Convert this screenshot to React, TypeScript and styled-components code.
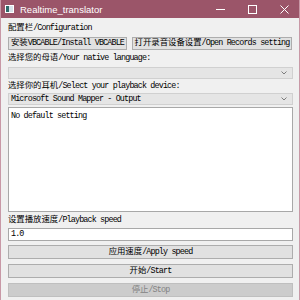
import React from "react";
import styled, { createGlobalStyle } from "styled-components";

const Global = createGlobalStyle`
  html, body {
    margin: 0;
    padding: 0;
    background: #ffffff;
  }
`;

const Frame = styled.div`
  width: 300px;
  height: 300px;
  display: flex;
  flex-direction: column;
  background: #f0f0f0;
  border-left: 1px solid #c898a6;
  border-right: 1px solid #c898a6;
  box-sizing: border-box;
  overflow: hidden;
  font-family: "Liberation Mono", "Noto Sans CJK SC", monospace;
  font-size: 8.4px;
  letter-spacing: -0.84px;
  color: #000;
`;

// CJK glyphs are full width, so they keep their natural spacing
const Han = styled.span`
  letter-spacing: 0;
`;

const TitleBar = styled.div`
  height: 18px;
  flex: none;
  display: flex;
  align-items: center;
  background: #9b5569;
  color: #fff;
  margin: 0 -1px;
  letter-spacing: 0;
`;

const AppIcon = styled.svg`
  margin-left: 5px;
  margin-right: 6px;
  flex: none;
`;

const Title = styled.span`
  font-family: "Liberation Sans", "Noto Sans", sans-serif;
  font-size: 9.5px;
  flex: 1;
`;

const Caption = styled.div`
  width: 32px;
  height: 18px;
  display: flex;
  align-items: center;
  justify-content: center;
`;

const Body = styled.div`
  flex: 1;
  display: flex;
  flex-direction: column;
  padding: 0 6px 3px 7px;
`;

const Label = styled.div<{ $h: number; $mt: number }>`
  height: ${(p) => p.$h}px;
  margin-top: ${(p) => p.$mt}px;
  line-height: ${(p) => p.$h}px;
  white-space: nowrap;
`;

const ButtonRow = styled.div`
  display: flex;
  gap: 5px;
  margin-top: 2px;
  height: 13px;
`;

const Button = styled.div<{ $w?: number; $h?: number; $mt?: number; $disabled?: boolean }>`
  box-sizing: border-box;
  flex: none;
  ${(p) => (p.$w ? `width: ${p.$w}px;` : "")}
  height: ${(p) => p.$h ?? 13}px;
  line-height: ${(p) => (p.$h ?? 13) - 2}px;
  margin-top: ${(p) => p.$mt ?? 0}px;
  background: ${(p) => (p.$disabled ? "#cccccc" : "#e1e1e1")};
  border: 1px solid ${(p) => (p.$disabled ? "#bfbfbf" : "#adadad")};
  color: ${(p) => (p.$disabled ? "#838383" : "#000")};
  text-align: center;
  white-space: nowrap;
  overflow: hidden;
`;

const Combo = styled.div<{ $mt: number }>`
  box-sizing: border-box;
  height: 12px;
  margin-top: ${(p) => p.$mt}px;
  background: #e5e5e5;
  border: 1px solid #d0d0d0;
  display: flex;
  align-items: center;
  padding: 0 5px 0 2px;
  white-space: nowrap;
`;

const ComboText = styled.span`
  flex: 1;
`;

const TextArea = styled.div`
  box-sizing: border-box;
  flex: 1;
  margin-top: 2px;
  background: #fff;
  border: 1px solid #a8a8a8;
  padding: 3px 2px;
  line-height: 10px;
`;

const Input = styled.div`
  box-sizing: border-box;
  height: 13px;
  line-height: 11px;
  margin-top: 2px;
  background: #fff;
  border: 1px solid #a8a8a8;
  padding: 0 2px;
`;

const Chevron = () => (
  <svg width="6" height="4" viewBox="0 0 6 4">
    <polyline points="0.5,0.5 3,3 5.5,0.5" fill="none" stroke="#707070" strokeWidth="0.9" />
  </svg>
);

const App: React.FC = () => (
  <Frame>
    <Global />
    <TitleBar>
      <AppIcon width="9" height="8" viewBox="0 0 9 8">
        <rect x="0" y="0" width="9" height="8" fill="#ffffff" />
        <rect x="1" y="1" width="3" height="6" fill="#2f6b6a" />
        <rect x="4" y="1" width="4" height="6" fill="#d8e3ea" />
      </AppIcon>
      <Title>Realtime_translator</Title>
      <Caption>
        <svg width="9" height="9" viewBox="0 0 9 9">
          <line x1="0" y1="4.5" x2="9" y2="4.5" stroke="#fff" strokeWidth="1" />
        </svg>
      </Caption>
      <Caption>
        <svg width="9" height="9" viewBox="0 0 9 9">
          <rect x="0.5" y="0.5" width="8" height="8" fill="none" stroke="#fff" strokeWidth="1" />
        </svg>
      </Caption>
      <Caption>
        <svg width="9" height="9" viewBox="0 0 9 9">
          <path d="M0.5 0.5 L8.5 8.5 M8.5 0.5 L0.5 8.5" stroke="#fff" strokeWidth="1" />
        </svg>
      </Caption>
    </TitleBar>
    <Body>
      <Label $h={13} $mt={4}>
        <Han>配置栏</Han>/Configuration
      </Label>
      <ButtonRow>
        <Button $w={119}>
          <Han>安装</Han>VBCABLE/Install VBCABLE
        </Button>
        <Button $w={160}>
          <Han>打开录音设备设置</Han>/Open Records setting
        </Button>
      </ButtonRow>
      <Label $h={13} $mt={2}>
        <Han>选择您的母语</Han>/Your native language:
      </Label>
      <Combo $mt={2}>
        <ComboText />
        <Chevron />
      </Combo>
      <Label $h={10} $mt={2}>
        <Han>选择你的耳机</Han>/Select your playback device:
      </Label>
      <Combo $mt={2}>
        <ComboText>Microsoft Sound Mapper - Output</ComboText>
        <Chevron />
      </Combo>
      <TextArea>No default setting</TextArea>
      <Label $h={12} $mt={2}>
        <Han>设置播放速度</Han>/Playback speed
      </Label>
      <Input>1.0</Input>
      <Button $h={14} $mt={4}>
        <Han>应用速度</Han>/Apply speed
      </Button>
      <Button $h={14} $mt={5}>
        <Han>开始</Han>/Start
      </Button>
      <Button $h={14} $mt={5} $disabled>
        <Han>停止</Han>/Stop
      </Button>
    </Body>
  </Frame>
);

export default App;
